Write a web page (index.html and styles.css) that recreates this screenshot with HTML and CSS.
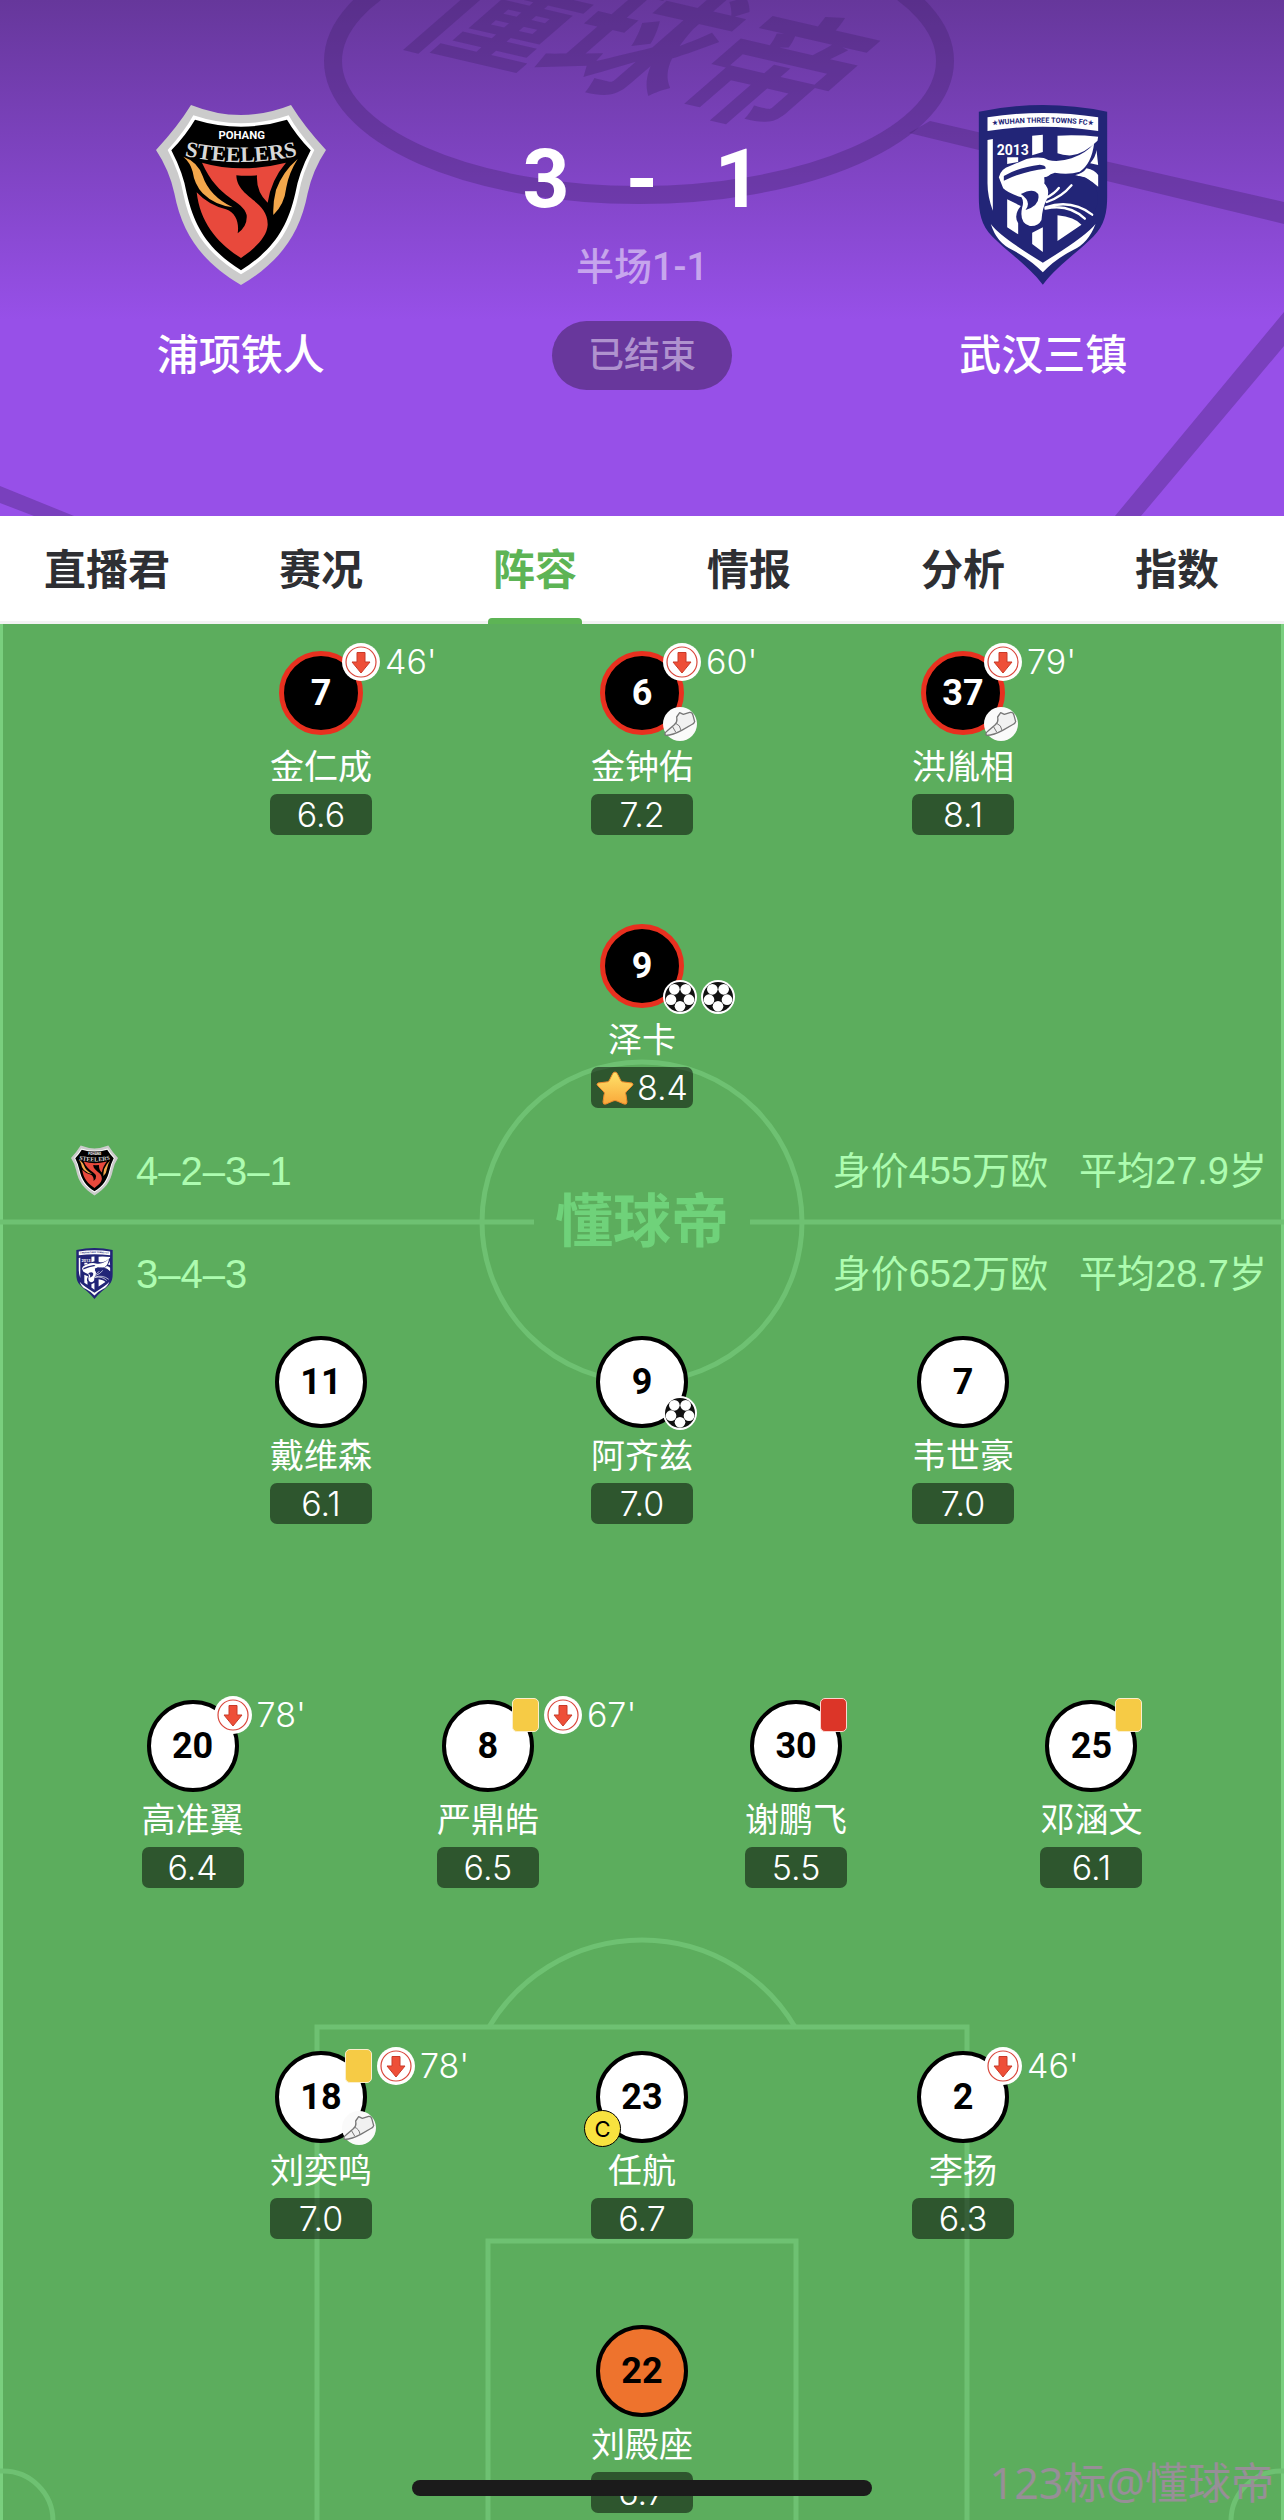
FILE: index.html
```
<!DOCTYPE html>
<html lang="zh-CN">
<head>
    <meta charset="UTF-8">
    <meta name="viewport" content="width=device-width, initial-scale=1.0">
    <title>浦项铁人 3-1 武汉三镇</title>
    <link rel="stylesheet" href="styles.css">
</head>
<body>
    <!-- shared icons -->
    <svg class="sprite" aria-hidden="true">
        <defs>
            <linearGradient id="gold" x1="0" y1="0" x2="0" y2="1">
                <stop offset="0" stop-color="#ffe36a"/>
                <stop offset="1" stop-color="#f9a83a"/>
            </linearGradient>
            <path id="steelers-arc" d="M140 192Q330 240 520 192"/>
            <path id="wuhan-arc" d="M90 108Q254 88 418 108"/>
        </defs>
        <symbol id="pohang" viewBox="75 45 510 540">
            <path fill="#cbcbcb" d="M180 45Q330 105 480 45Q520 110 585 180Q545 240 530 310C505 440 440 520 330 585C220 520 155 440 130 310Q115 240 75 180Q140 110 180 45Z"/>
            <path fill="#fff" d="M187 76Q330 124 473 76Q500 125 550 180Q513 250 503 312C480 425 430 492 330 553C230 492 180 425 157 312Q147 250 110 180Q160 125 187 76Z"/>
            <path fill="#000" d="M192 89Q330 131 468 89Q495 135 539 181Q503 250 493 310C468 418 425 480 330 541C235 480 192 418 167 310Q157 250 121 181Q165 135 192 89Z"/>
            <path fill="#e8493c" d="M213 218Q330 252 465 218Q420 270 410 338Q375 305 378 256Q345 259 316 256C318 325 412 330 410 405C408 445 362 482 330 504C260 460 208 400 197 307Q232 345 285 358C315 368 325 400 320 430Q350 408 347 375C338 330 262 330 213 218Z"/>
            <path fill="#f3a74b" d="M157 200Q200 215 215 258Q235 318 305 352Q250 345 215 310Q190 282 185 245Q178 218 157 200ZM500 207Q455 245 435 300Q425 340 427 375Q460 345 466 292Q473 250 500 207Z"/>
            <text class="crest-small" x="332" y="146" font-size="34">POHANG</text>
            <text class="crest-arc" font-size="66"><textPath href="#steelers-arc" startOffset="50%">STEELERS</textPath></text>
        </symbol>
        <symbol id="wuhan" viewBox="62 45 385 540">
            <path fill="#222577" d="M62 65Q254 25 447 65V320C447 365 440 405 405 440C360 485 300 525 254 584C208 525 148 485 103 440C68 405 62 365 62 320Z"/>
            <path fill="#fff" d="M88 82Q254 56 420 82V123Q254 97 88 123ZM88 150L104 147V362Q88 320 88 280ZM147 202H180V216L147 222ZM222 137L254 134V186L222 196ZM298 137Q360 134 420 140L418 152Q380 190 340 196Q315 197 298 190ZM415 180L420 225L396 220Q413 200 415 180ZM385 235Q410 240 420 255V290Q390 262 350 256Q375 250 385 235ZM298 376Q350 382 370 404L298 453ZM147 328L188 348Q165 375 180 400V433L147 412ZM222 428L254 412V486L222 462Z"/>
            <path fill="#fff" d="M122 262Q128 236 155 228L205 207Q250 197 270 210Q300 218 340 205Q385 190 408 160Q400 222 365 245Q330 256 290 248Q262 255 258 280Q278 300 265 330Q252 355 250 390Q240 410 215 408Q182 400 192 352Q198 335 190 322Q150 310 135 295Z"/>
            <path fill="#222577" d="M188 312Q225 292 240 312Q248 345 202 360Q222 335 188 312ZM137 258Q180 232 245 224Q265 226 262 236Q200 242 137 272ZM258 262Q320 245 380 262Q425 285 418 340Q410 370 395 380Q350 330 280 345Q265 320 275 300Q258 285 258 262Z"/>
            <path fill="none" stroke="#fff" stroke-width="7" stroke-linecap="round" d="M262 352Q340 326 402 374M262 356Q330 340 380 386M266 336Q310 322 340 286M262 325Q290 310 302 294"/>
            <path fill="#fff" d="M98 402Q125 440 254 518Q382 440 412 402Q390 460 345 480Q290 508 254 547Q215 508 163 480Q115 458 98 402Z"/>
            <text class="crest-navy" font-size="22"><textPath href="#wuhan-arc" startOffset="50%">★WUHAN THREE TOWNS FC★</textPath></text>
            <text class="crest-small" x="164" y="194" font-size="42">2013</text>
        </symbol>
        <symbol id="sub-off" viewBox="0 0 38 38">
            <circle cx="19" cy="19" r="19" fill="#fff"/>
            <circle cx="19" cy="19" r="15" fill="none" stroke="#d9473c" stroke-width="1.2"/>
            <path fill="#ee4f38" stroke="#c93a28" d="M15 9.500H23V19H28L19 30L10 19H15Z" stroke-linejoin="round"/>
        </symbol>
        <symbol id="assist" viewBox="0 0 102 102">
            <circle cx="51" cy="51" r="51" fill="#fafafa"/>
            <path fill="#f1f1f1" stroke="#777" stroke-width="4" stroke-linejoin="round" d="M41 30L50 17L61 22L80 16Q88 15 90 25L95 44Q94 50 84 54L56 70Q30 84 8 85Q2 80 12 72L34 53Q44 46 41 30Z"/>
            <path fill="none" stroke="#777" stroke-width="3" d="M28 58L38 75M38 49Q52 54 54 70"/>
        </symbol>
        <symbol id="ball" viewBox="0 0 102 102">
            <circle cx="51" cy="51" r="51" fill="#fff"/>
            <circle cx="51" cy="51" r="45" fill="#111"/>
            <g fill="#fff">
                <circle cx="34" cy="28" r="16"/>
                <circle cx="68" cy="28" r="16"/>
                <circle cx="24" cy="59" r="16"/>
                <circle cx="78" cy="59" r="16"/>
                <circle cx="51" cy="79" r="16"/>
            </g>
        </symbol>
        <symbol id="star" viewBox="0 0 38 34">
            <path fill="url(#gold)" stroke="#ee8a2c" stroke-linejoin="round" d="M19 1Q21 1 22 4L25 10Q26 11 28 11L36 12Q38 13 36 15L30 21Q29 22 30 24L31 31Q31 34 28 33L21 30Q19 29 17 30L10 33Q7 34 7 31L8 24Q9 22 8 21L2 15Q0 13 2 12L10 11Q12 11 13 10L16 4Q17 1 19 1Z"/>
        </symbol>
    </svg>

    <header class="match">
        <svg class="match-bg" viewBox="0 0 1284 516" preserveAspectRatio="xMidYMin slice" aria-hidden="true">
            <ellipse cx="639" cy="61" rx="306" ry="134"/>
            <path d="M930 121L1284 202V224L909 133ZM1284 312V346L1141 516H1115ZM0 486L74 516H34L0 503Z"/>
            <text x="423" y="42" transform="rotate(13 423 42) skewX(-36)">懂球帝</text>
        </svg>
        <div class="team">
            <svg class="crest" role="img" aria-label="浦项铁人"><use href="#pohang"/></svg>
            <h2 class="team-name">浦项铁人</h2>
        </div>
        <div class="result">
            <div class="score"><span>3</span><span>-</span><span>1</span></div>
            <p class="half">半场1-1</p>
            <span class="status">已结束</span>
        </div>
        <div class="team">
            <svg class="crest" role="img" aria-label="武汉三镇"><use href="#wuhan"/></svg>
            <h2 class="team-name">武汉三镇</h2>
        </div>
    </header>

    <nav class="tabs">
        <a class="tab" href="#live">直播君</a>
        <a class="tab" href="#match">赛况</a>
        <a class="tab active" href="#lineup">阵容</a>
        <a class="tab" href="#info">情报</a>
        <a class="tab" href="#analysis">分析</a>
        <a class="tab" href="#odds">指数</a>
    </nav>

    <main class="pitch" id="lineup">
        <svg class="pitch-lines" viewBox="0 0 1284 1896" preserveAspectRatio="xMidYMin slice" aria-hidden="true">
            <circle cx="642" cy="598" r="160"/>
            <path d="M0 598H534M750 598H1284"/>
            <path d="M317 1896V1403H967V1896M488 1896V1617H796V1896"/>
            <path d="M489 1403A178 178 0 0 1 795 1403"/>
            <circle cx="3" cy="1897" r="50"/>
            <circle cx="1281" cy="1897" r="50"/>
            <text x="642" y="618">懂球帝</text>
        </svg>

        <section class="side home">
            <div class="line three">
                <div class="player">
                    <div class="disc"><span class="shirt">7</span></div>
                    <div class="events"><svg class="sub"><use href="#sub-off"/></svg><span class="minute">46'</span></div>
                    <span class="name">金仁成</span>
                    <span class="rating">6.6</span>
                </div>
                <div class="player">
                    <div class="disc"><span class="shirt">6</span></div>
                    <div class="events"><svg class="sub"><use href="#sub-off"/></svg><span class="minute">60'</span></div>
                    <div class="actions"><svg class="action"><use href="#assist"/></svg></div>
                    <span class="name">金钟佑</span>
                    <span class="rating">7.2</span>
                </div>
                <div class="player">
                    <div class="disc"><span class="shirt">37</span></div>
                    <div class="events"><svg class="sub"><use href="#sub-off"/></svg><span class="minute">79'</span></div>
                    <div class="actions"><svg class="action"><use href="#assist"/></svg></div>
                    <span class="name">洪胤相</span>
                    <span class="rating">8.1</span>
                </div>
            </div>
            <div class="line one">
                <div class="player">
                    <div class="disc"><span class="shirt">9</span></div>
                    <div class="actions">
                        <svg class="action"><use href="#ball"/></svg>
                        <svg class="action"><use href="#ball"/></svg>
                    </div>
                    <span class="name">泽卡</span>
                    <span class="rating"><svg class="star"><use href="#star"/></svg>8.4</span>
                </div>
            </div>
        </section>

        <section class="formations">
            <div class="formation">
                <svg class="mini-crest"><use href="#pohang"/></svg>
                <span class="shape">4–2–3–1</span>
                <span>身价455万欧</span>
                <span>平均27.9岁</span>
            </div>
            <div class="formation">
                <svg class="mini-crest"><use href="#wuhan"/></svg>
                <span class="shape">3–4–3</span>
                <span>身价652万欧</span>
                <span>平均28.7岁</span>
            </div>
        </section>

        <section class="side away">
            <div class="line three forwards">
                <div class="player">
                    <div class="disc"><span class="shirt">11</span></div>
                    <span class="name">戴维森</span>
                    <span class="rating">6.1</span>
                </div>
                <div class="player">
                    <div class="disc"><span class="shirt">9</span></div>
                    <div class="actions"><svg class="action"><use href="#ball"/></svg></div>
                    <span class="name">阿齐兹</span>
                    <span class="rating">7.0</span>
                </div>
                <div class="player">
                    <div class="disc"><span class="shirt">7</span></div>
                    <span class="name">韦世豪</span>
                    <span class="rating">7.0</span>
                </div>
            </div>
            <div class="line four midfield">
                <div class="player">
                    <div class="disc"><span class="shirt">20</span></div>
                    <div class="events"><svg class="sub"><use href="#sub-off"/></svg><span class="minute">78'</span></div>
                    <span class="name">高准翼</span>
                    <span class="rating">6.4</span>
                </div>
                <div class="player">
                    <div class="disc"><span class="shirt">8</span></div>
                    <div class="events"><i class="card yellow"></i><svg class="sub"><use href="#sub-off"/></svg><span class="minute">67'</span></div>
                    <span class="name">严鼎皓</span>
                    <span class="rating">6.5</span>
                </div>
                <div class="player">
                    <div class="disc"><span class="shirt">30</span></div>
                    <div class="events"><i class="card red"></i></div>
                    <span class="name">谢鹏飞</span>
                    <span class="rating">5.5</span>
                </div>
                <div class="player">
                    <div class="disc"><span class="shirt">25</span></div>
                    <div class="events"><i class="card yellow"></i></div>
                    <span class="name">邓涵文</span>
                    <span class="rating">6.1</span>
                </div>
            </div>
            <div class="line three defence">
                <div class="player">
                    <div class="disc"><span class="shirt">18</span></div>
                    <div class="events"><i class="card yellow"></i><svg class="sub"><use href="#sub-off"/></svg><span class="minute">78'</span></div>
                    <div class="actions"><svg class="action"><use href="#assist"/></svg></div>
                    <span class="name">刘奕鸣</span>
                    <span class="rating">7.0</span>
                </div>
                <div class="player">
                    <div class="disc"><span class="shirt">23</span></div>
                    <span class="captain">C</span>
                    <span class="name">任航</span>
                    <span class="rating">6.7</span>
                </div>
                <div class="player">
                    <div class="disc"><span class="shirt">2</span></div>
                    <div class="events"><svg class="sub"><use href="#sub-off"/></svg><span class="minute">46'</span></div>
                    <span class="name">李扬</span>
                    <span class="rating">6.3</span>
                </div>
            </div>
            <div class="line one">
                <div class="player keeper">
                    <div class="disc"><span class="shirt">22</span></div>
                    <span class="name">刘殿座</span>
                    <span class="rating">6.7</span>
                </div>
            </div>
        </section>

        <span class="watermark">123标@懂球帝</span>
        <div class="home-bar"></div>
    </main>
</body>
</html>
```
FILE: styles.css
```
* {
    box-sizing: border-box;
}
body {
    margin: 0;
    font-family: Inter, "Noto Sans CJK SC", sans-serif;
    background: #5cad5d;
}
.sprite {
    position: absolute;
    width: 0;
    height: 0;
}
.crest-small,
.crest-arc {
    fill: #fff;
    font-family: Roboto, sans-serif;
    font-weight: 700;
    text-anchor: middle;
}
.crest-arc {
    fill: #d8d8d8;
    font-family: "Liberation Serif", serif;
}
.crest-navy {
    fill: #222577;
    font-family: Roboto, "DejaVu Sans", sans-serif;
    font-weight: 700;
    text-anchor: middle;
}

/* match header */
.match {
    position: relative;
    display: grid;
    grid-template-columns: 3fr 2fr 3fr;
    padding: 105px 0 126px;
    color: #fff;
    background: linear-gradient(#66379b 0, #9750e8 320px);
    overflow: hidden;
}
.match-bg {
    position: absolute;
    inset: 0;
    width: 100%;
    height: 100%;
    fill: rgba(66, 35, 110, 0.35);
}
.match-bg ellipse {
    fill: none;
    stroke: rgba(66, 35, 110, 0.35);
    stroke-width: 18;
}
.match-bg text {
    font-size: 138px;
    font-weight: 700;
}
.team,
.result {
    position: relative;
    display: flex;
    flex-direction: column;
    align-items: center;
}
.crest {
    width: 170px;
    height: 180px;
}
.team-name {
    margin: 40px 0 0;
    font-size: 42px;
    font-weight: 500;
    line-height: 60px;
}
.result {
    padding-top: 32px;
}
.score {
    display: grid;
    grid-template-columns: repeat(3, 96px);
    font-family: Roboto, sans-serif;
    font-size: 82px;
    font-weight: 700;
    line-height: 84px;
    text-align: center;
}
.half {
    margin: 24px 0 32px;
    font-family: Roboto, "Noto Sans CJK SC", sans-serif;
    font-size: 38px;
    font-weight: 500;
    line-height: 44px;
    color: rgba(255, 255, 255, 0.5);
}
.status {
    width: 180px;
    border-radius: 35px;
    background: #68379c;
    font-size: 36px;
    font-weight: 500;
    line-height: 69px;
    text-align: center;
    color: #af92ce;
}

/* tabs */
.tabs {
    display: grid;
    grid-template-columns: repeat(6, 1fr);
    height: 108px;
    background: #fff;
    box-shadow: inset 0 -3px #f3f3f3;
}
.tab {
    position: relative;
    font-size: 42px;
    font-weight: 700;
    line-height: 108px;
    text-align: center;
    text-decoration: none;
    color: #2e2f33;
}
.tab.active {
    color: #5db455;
}
.tab.active::after {
    content: "";
    position: absolute;
    left: 50%;
    bottom: 0;
    width: 94px;
    height: 6px;
    margin-left: -47px;
    border-radius: 4px 4px 0 0;
    background: #5db455;
}

/* pitch */
.pitch {
    position: relative;
    padding: 23px 0 7px;
    color: #fff;
    background: #5cad5d;
    overflow: hidden;
}
.pitch::before {
    content: "";
    position: absolute;
    inset: 0;
    border: solid #79cf7e;
    border-width: 0 3px;
}
.pitch-lines {
    position: absolute;
    inset: 0;
    width: 100%;
    height: 100%;
    fill: none;
    stroke: #6ec172;
    stroke-width: 5;
}
.pitch-lines text {
    fill: #6fd27a;
    stroke: none;
    font-size: 58px;
    font-weight: 700;
    text-anchor: middle;
}
.side {
    position: relative;
}
.line {
    display: grid;
    justify-items: center;
}
.one {
    grid-template-columns: 1fr;
}
.three {
    grid-template-columns: repeat(3, 1fr);
    padding: 0 12.5%;
}
.four {
    grid-template-columns: 22fr 24fr 24fr 22fr;
    padding: 0 4%;
}
.home .three {
    margin-bottom: 85px;
}
.forwards {
    margin-bottom: 176px;
}
.midfield {
    margin-bottom: 163px;
}
.defence {
    margin-bottom: 86px;
}
.player {
    position: relative;
    display: flex;
    flex-direction: column;
    align-items: center;
    width: 120px;
}
.disc {
    display: flex;
    align-items: center;
    justify-content: center;
    height: 92px;
}
.shirt {
    width: 92px;
    border: 4px solid #000;
    border-radius: 50%;
    background: #fff;
    font-family: Roboto, sans-serif;
    font-size: 36px;
    font-weight: 700;
    line-height: 84px;
    text-align: center;
    color: #000;
}
.home .shirt {
    width: 84px;
    border: 5px solid #e8301f;
    background: #000;
    line-height: 74px;
    color: #fff;
}
.keeper .shirt {
    background: #ee732d;
}
.name {
    font-size: 34px;
    line-height: 55px;
    white-space: nowrap;
}
.rating {
    display: flex;
    align-items: center;
    justify-content: center;
    gap: 3px;
    width: 102px;
    height: 41px;
    border-radius: 7px;
    background: rgba(0, 0, 0, 0.5);
    font-size: 34px;
    font-weight: 300;
}
.star {
    width: 38px;
    height: 34px;
}

/* badges lying over the shirt number */
.events {
    position: absolute;
    top: -4px;
    left: calc(50% + 21px);
    display: flex;
    align-items: center;
    gap: 5px;
    height: 38px;
}
.sub {
    flex: none;
    width: 38px;
    height: 38px;
}
.card {
    flex: none;
    width: 27px;
    height: 34px;
    margin-left: 3px;
    border: 1px solid #fbeecb;
    border-radius: 5px;
    background: #f6cb45;
}
.card.red {
    border-color: #fbd5d0;
    background: #dc3528;
}
.minute {
    font-size: 34px;
    font-weight: 300;
    line-height: 38px;
}
.actions {
    position: absolute;
    top: 60px;
    left: calc(50% + 21px);
    display: flex;
    gap: 4px;
}
.action {
    width: 34px;
    height: 34px;
}
.captain {
    position: absolute;
    top: 59px;
    right: calc(50% + 21px);
    width: 37px;
    height: 37px;
    border: 1px solid #000;
    border-radius: 50%;
    background: #f8e23f;
    font-size: 22px;
    line-height: 36px;
    text-align: center;
    color: #000;
}

/* formation summary */
.formations {
    position: relative;
    display: grid;
    gap: 52px;
    padding: 37px 17px 37px 71px;
}
.formation {
    display: flex;
    align-items: center;
    gap: 31px;
    height: 51px;
    font-family: "Liberation Sans", "Noto Sans CJK SC", sans-serif;
    font-size: 38px;
    line-height: 52px;
    color: #adfcb0;
}
.mini-crest {
    width: 47px;
    height: 51px;
}
.shape {
    flex: 1;
    margin-left: -13px;
    font-size: 40px;
}

.watermark {
    position: absolute;
    right: 10px;
    bottom: 7px;
    font-family: "Noto Sans", "Noto Sans CJK SC", sans-serif;
    font-size: 43px;
    line-height: 60px;
    color: #978f97;
}
.home-bar {
    position: absolute;
    left: 50%;
    bottom: 24px;
    width: 460px;
    height: 16px;
    margin-left: -230px;
    border-radius: 8px;
    background: #1b1b1b;
}
```
